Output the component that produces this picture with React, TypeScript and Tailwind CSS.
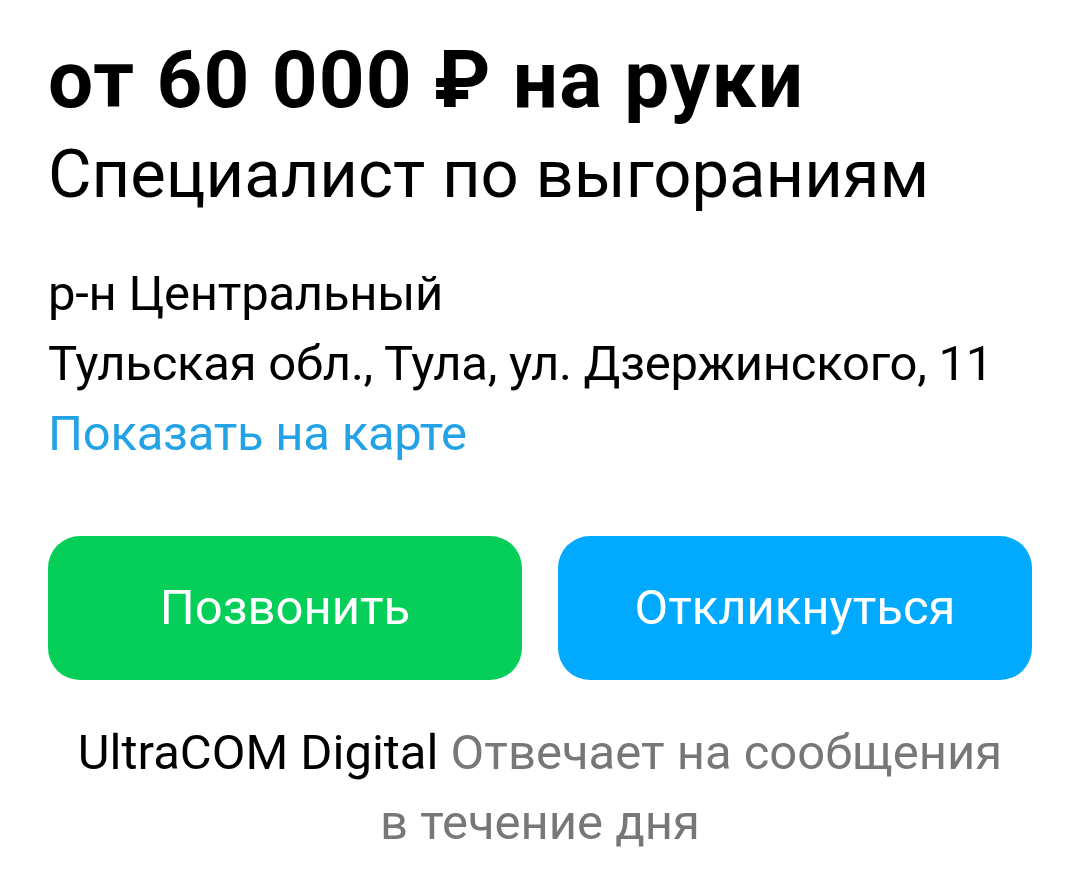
export default function App() {
  return (
    <div className="min-h-[873px] w-[1080px] bg-white px-12 pt-[35px] font-['Roboto','Noto_Sans',sans-serif] text-black">
      <h1 className="text-[80px] font-bold leading-[90px] tracking-[0.015em]">
        от 60 000 ₽ на руки
      </h1>
      <h2 className="mt-1 text-[67px] font-normal leading-[90px]">
        Специалист по выгораниям
      </h2>

      <div className="mt-[40px] text-[49px] leading-[70px] tracking-[-0.005em]">
        <div>р-н Центральный</div>
        <div>Тульская обл., Тула, ул. Дзержинского, 11</div>
        <div className="text-[#23a3e5]">Показать на карте</div>
      </div>

      <div className="mt-[67px] grid grid-cols-2 gap-9">
        <button className="flex h-[144px] items-center justify-center rounded-[32px] bg-[#05cf59] text-[49px] text-white">
          Позвонить
        </button>
        <button className="flex h-[144px] items-center justify-center rounded-[32px] bg-[#02aaff] text-[49px] text-white">
          Откликнуться
        </button>
      </div>

      <p className="mt-[38px] text-center text-[49px] leading-[70px] text-[#777777]">
        <span className="text-black">UltraCOM Digital</span> Отвечает на сообщения
        <br />
        в течение дня
      </p>
    </div>
  );
}
